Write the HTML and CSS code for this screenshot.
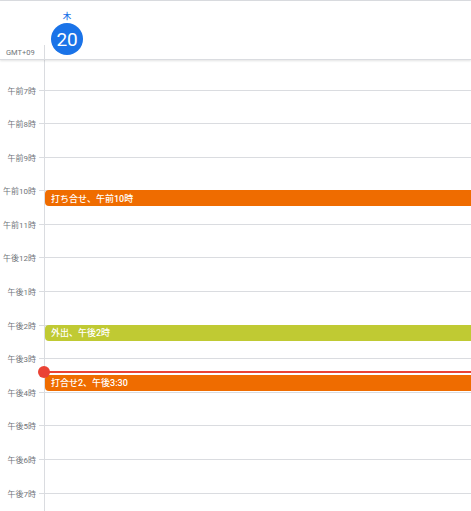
FILE: index.html
```html
<!DOCTYPE html>
<html lang="ja">
<head>
<meta charset="utf-8">
<link rel="stylesheet" href="styles.css">
</head>
<body>
<div class="cal">
  <header class="head">
    <div class="tz">GMT+09</div>
    <div class="day">
      <span class="dow">木</span>
      <span class="date">20</span>
    </div>
  </header>
  <div class="viewport">
    <div class="grid">
      <div class="gutter">
        <div class="hour"></div>
        <div class="hour"><span>午前7時</span></div>
        <div class="hour"><span>午前8時</span></div>
        <div class="hour"><span>午前9時</span></div>
        <div class="hour"><span>午前10時</span></div>
        <div class="hour"><span>午前11時</span></div>
        <div class="hour"><span>午後12時</span></div>
        <div class="hour"><span>午後1時</span></div>
        <div class="hour"><span>午後2時</span></div>
        <div class="hour"><span>午後3時</span></div>
        <div class="hour"><span>午後4時</span></div>
        <div class="hour"><span>午後5時</span></div>
        <div class="hour"><span>午後6時</span></div>
        <div class="hour"><span>午後7時</span></div>
        <div class="hour"></div>
      </div>
      <div class="col">
        <div class="slot"></div><div class="slot"></div><div class="slot"></div>
        <div class="slot"></div><div class="slot"></div><div class="slot"></div>
        <div class="slot"></div><div class="slot"></div><div class="slot"></div>
        <div class="slot"></div><div class="slot"></div><div class="slot"></div>
        <div class="slot"></div><div class="slot"></div><div class="slot"></div>
        <div class="event orange" style="top: calc(var(--h) * 4)">打ち合せ、午前10時</div>
        <div class="event olive" style="top: calc(var(--h) * 8)">外出、午後2時</div>
        <div class="now" style="top: calc(var(--h) * 9.41)"></div>
        <div class="event orange" style="top: calc(var(--h) * 9.5)">打合せ2、午後3:30</div>
      </div>
    </div>
  </div>
</div>
</body>
</html>
```
FILE: styles.css
```css
* { box-sizing: border-box; }
html, body { margin: 0; padding: 0; background: #fff; }
body {
  font-family: Roboto, "Noto Sans CJK JP", sans-serif;
  --h: 33.6px;
  width: 471px;
  height: 511px;
  overflow: hidden;
}
.cal {
  border-top: 1px solid #dadce0;
  height: 511px;
  display: flex;
  flex-direction: column;
}
.head {
  display: flex;
  height: 59px;
  background: #fff;
  border-bottom: 1px solid #dadce0;
  box-shadow: 0 1px 2px rgba(60, 64, 67, 0.15);
  position: relative;
  z-index: 2;
  flex: none;
}
.tz {
  width: 45px;
  flex: none;
  font-size: 7.5px;
  color: #70757a;
  padding: 0 0 2px 6px;
  display: flex;
  align-items: flex-end;
  position: relative;
}
.tz::after {
  content: "";
  position: absolute;
  right: 0;
  bottom: 0;
  width: 1px;
  height: 14px;
  background: #dadce0;
}
.day {
  display: flex;
  flex-direction: column;
  align-items: center;
  margin-left: 6px;
  padding-top: 10px;
}
.dow {
  font-size: 8.5px;
  line-height: 11px;
  color: #1a73e8;
  font-weight: 500;
}
.date {
  margin-top: 1px;
  width: 32px;
  height: 32px;
  border-radius: 50%;
  background: #1a73e8;
  color: #fff;
  font-size: 19px;
  display: flex;
  align-items: center;
  justify-content: center;
  letter-spacing: -0.3px;
}
.viewport {
  flex: 1;
  overflow: hidden;
  position: relative;
}
.grid {
  display: flex;
  margin-top: -4.1px;
}
.gutter {
  width: 44px;
  flex: none;
}
.hour {
  height: var(--h);
  position: relative;
}
.hour::after {
  content: "";
  position: absolute;
  top: 0;
  right: 0;
  width: 5px;
  height: 1px;
  background: #dadce0;
}
.hour span {
  position: absolute;
  right: 8px;
  top: 0;
  transform: translateY(-50%);
  font-size: 8px;
  color: #70757a;
  white-space: nowrap;
}
.col {
  flex: 1;
  border-left: 1px solid #dadce0;
  position: relative;
}
.slot {
  height: var(--h);
  border-top: 1px solid #dadce0;
}
.event {
  position: absolute;
  left: 0;
  right: -6px;
  height: calc(var(--h) / 2 - 1px);
  border-radius: 4px;
  color: #fff;
  font-size: 9px;
  font-weight: 500;
  padding-left: 6px;
  display: flex;
  align-items: center;
  white-space: nowrap;
}
.orange { background: #ef6c00; }
.olive { background: #c0ca33; }
.now {
  position: absolute;
  left: -1px;
  right: 0;
  height: 2px;
  margin-top: -1px;
  background: #ea4335;
  z-index: 1;
}
.now::before {
  content: "";
  position: absolute;
  left: -6px;
  top: -5px;
  width: 12px;
  height: 12px;
  border-radius: 50%;
  background: #ea4335;
}
```
